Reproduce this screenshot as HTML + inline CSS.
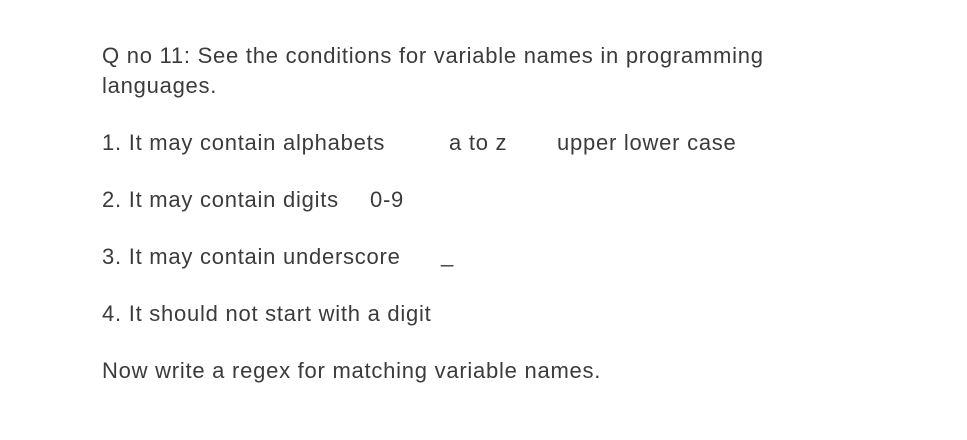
<!DOCTYPE html>
<html><head><style>
body{margin:0;width:967px;height:440px;background:#fff;position:relative;overflow:hidden;font-family:"Liberation Sans",sans-serif;color:#3b3b3b;font-size:22px;letter-spacing:0.75px}
div{position:absolute;white-space:nowrap;line-height:30px}
</style></head><body>
<div style="left:102px;top:41px">Q no 11: See the conditions for variable names in programming</div>
<div style="left:102px;top:71px">languages.</div>
<div style="left:102px;top:128px">1. It may contain alphabets</div>
<div style="left:449px;top:128px">a to z</div>
<div style="left:557px;top:128px">upper lower case</div>
<div style="left:102px;top:185px">2. It may contain digits</div>
<div style="left:370px;top:185px">0-9</div>
<div style="left:102px;top:242px">3. It may contain underscore</div>
<div style="left:441px;top:240px">_</div>
<div style="left:102px;top:299px">4. It should not start with a digit</div>
<div style="left:102px;top:356px">Now write a regex for matching variable names.</div>
</body></html>
